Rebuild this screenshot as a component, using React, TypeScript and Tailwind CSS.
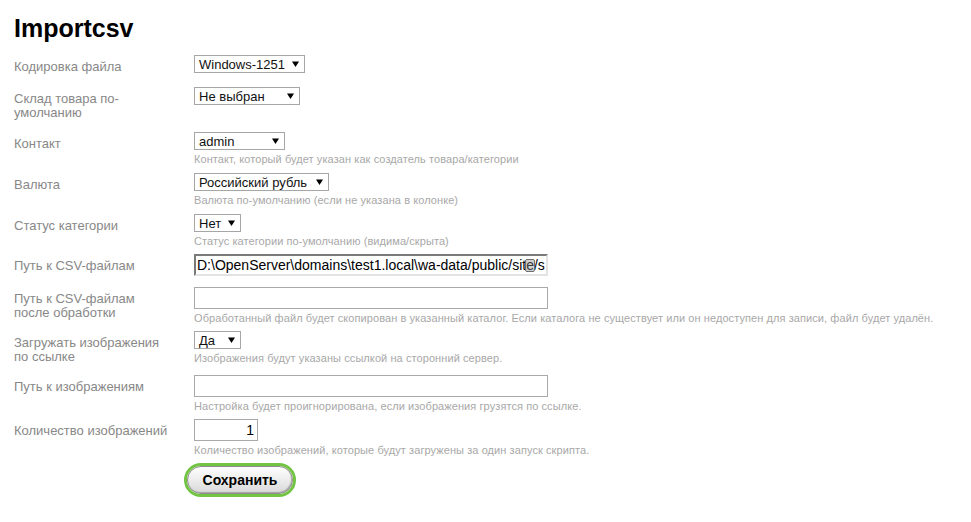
import React from "react";

const FONT = { fontFamily: '"Liberation Sans", Arial, sans-serif' };

function Arrow() {
  return (
    <svg width="7" height="6" viewBox="0 0 7 6" className="shrink-0">
      <path d="M0 0.5h7L3.5 6z" fill="#000" />
    </svg>
  );
}

function Select({ value, width }: { value: string; width: string }) {
  return (
    <div
      className={`flex h-[18px] items-center justify-between border border-[#a6a6a6] bg-white pl-[4px] pr-[5px] text-[13px] font-normal leading-none text-[#111] ${width}`}
    >
      <span className="whitespace-nowrap">{value}</span>
      <Arrow />
    </div>
  );
}

function TextInput({ value, width, align }: { value?: string; width: string; align?: string }) {
  return (
    <div
      className={`flex h-[22px] items-center overflow-hidden whitespace-nowrap border border-[#a9a9a9] bg-white px-[3px] text-[14px] text-black ${width} ${align ?? ""}`}
    >
      {value}
    </div>
  );
}

function Hint({ children }: { children: React.ReactNode }) {
  return (
    <div className="mt-[3px] whitespace-nowrap text-[11px] leading-[12px] tracking-[0.08px] text-[#a8a8a8]">
      {children}
    </div>
  );
}

function Row({ label, h, children }: { label: React.ReactNode; h: string; children: React.ReactNode }) {
  return (
    <div className={`flex ${h}`}>
      <div className="w-[180px] shrink-0 pt-[5px] text-[13px] leading-[14px] text-[#888]">{label}</div>
      <div className="flex flex-col items-start">{children}</div>
    </div>
  );
}

export default function App() {
  return (
    <div className="min-h-[522px] w-[971px] bg-white pl-[14px] pt-[14px]" style={FONT}>
      <h1 className="h-[41px] text-[25px] font-bold leading-[28px] text-black">Importcsv</h1>

      <Row label="Кодировка файла" h="h-[32px]">
        <Select value="Windows-1251" width="w-[111px]" />
      </Row>
      <Row label={<>Склад товара по-<br />умолчанию</>} h="h-[45px]">
        <Select value="Не выбран" width="w-[106px]" />
      </Row>
      <Row label="Контакт" h="h-[41px]">
        <Select value="admin" width="w-[91px]" />
        <Hint>Контакт, который будет указан как создатель товара/категории</Hint>
      </Row>
      <Row label="Валюта" h="h-[41px]">
        <Select value="Российский рубль" width="w-[135px]" />
        <Hint>Валюта по-умолчанию (если не указана в колонке)</Hint>
      </Row>
      <Row label="Статус категории" h="h-[40px]">
        <Select value="Нет" width="w-[47px]" />
        <Hint>Статус категории по-умолчанию (видима/скрыта)</Hint>
      </Row>
      <Row label="Путь к CSV-файлам" h="h-[33px]">
        <div className="relative">
          <div className="flex h-[22px] w-[354px] items-center overflow-hidden whitespace-nowrap border-[2px] border-t-[#7a7a7a] border-l-[#7a7a7a] border-r-[#e3e3e3] border-b-[#e3e3e3] bg-white pl-[1px] text-[14px] text-black">
            D:\OpenServer\domains\test1.local\wa-data/public/site/s
          </div>
          <div className="absolute left-[331px] top-[5px] h-[13px] w-[10px] rounded-[2px] border border-[#6d6d6d] bg-[#8a8a8a]/40" />
        </div>
      </Row>
      <Row label={<>Путь к CSV-файлам<br />после обработки</>} h="h-[44px]">
        <TextInput width="w-[354px]" />
        <Hint>
          Обработанный файл будет скопирован в указанный каталог. Если каталога не существует или он недоступен для
          записи, файл будет удалён.
        </Hint>
      </Row>
      <Row label={<>Загружать изображения<br />по ссылке</>} h="h-[44px]">
        <Select value="Да" width="w-[47px]" />
        <Hint>Изображения будут указаны ссылкой на сторонний сервер.</Hint>
      </Row>
      <Row label="Путь к изображениям" h="h-[44px]">
        <TextInput width="w-[354px]" />
        <Hint>Настройка будет проигнорирована, если изображения грузятся по ссылке.</Hint>
      </Row>
      <Row label="Количество изображений" h="h-[44px]">
        <TextInput value="1" width="w-[64px]" align="justify-end" />
        <Hint>Количество изображений, которые будут загружены за один запуск скрипта.</Hint>
      </Row>

      <div className="ml-[170px]">
        <div className="inline-flex h-[34px] w-[112px] rounded-full border-[3px] border-[#72c442]">
          <button className="flex h-full w-full items-center justify-center rounded-full border border-[#8c8c8c] bg-gradient-to-b from-[#ffffff] to-[#d9d9d9] text-[14px] font-bold text-black shadow-[inset_-1px_-1px_1px_rgba(0,0,0,0.25)]">
            Сохранить
          </button>
        </div>
      </div>
    </div>
  );
}
